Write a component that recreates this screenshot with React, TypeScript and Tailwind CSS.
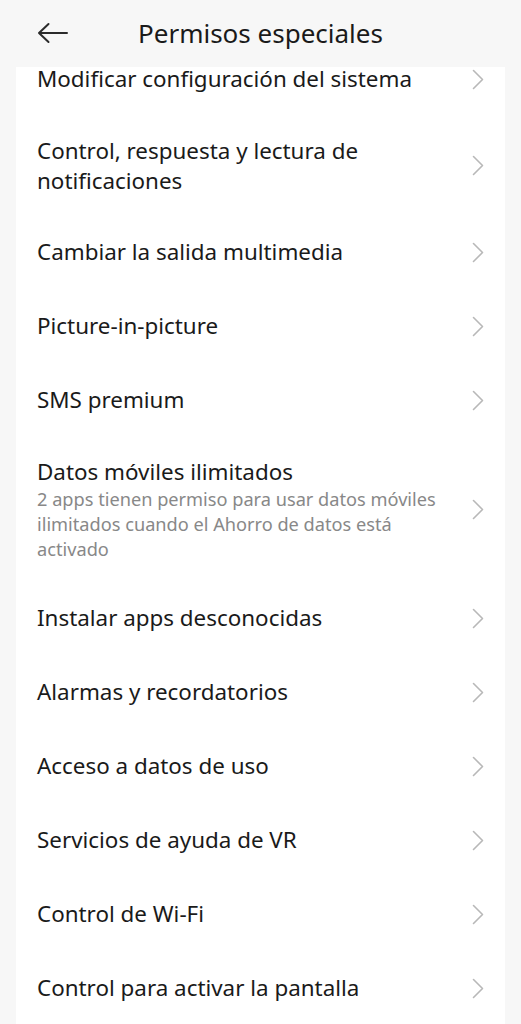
import React from "react";

type Item = {
  title: string;
  subtitle?: string;
};

const items: Item[] = [
  { title: "Modificar configuración del sistema" },
  { title: "Control, respuesta y lectura de notificaciones" },
  { title: "Cambiar la salida multimedia" },
  { title: "Picture-in-picture" },
  { title: "SMS premium" },
  {
    title: "Datos móviles ilimitados",
    subtitle:
      "2 apps tienen permiso para usar datos móviles ilimitados cuando el Ahorro de datos está activado",
  },
  { title: "Instalar apps desconocidas" },
  { title: "Alarmas y recordatorios" },
  { title: "Acceso a datos de uso" },
  { title: "Servicios de ayuda de VR" },
  { title: "Control de Wi-Fi" },
  { title: "Control para activar la pantalla" },
];

const Chevron: React.FC = () => (
  <svg width="12" height="21" viewBox="0 0 12 21" fill="none" className="shrink-0">
    <polyline
      points="1.5,1.5 10.5,10.5 1.5,19.5"
      stroke="#b8b8b8"
      strokeWidth={1.6}
      strokeLinecap="round"
      strokeLinejoin="round"
    />
  </svg>
);

const App: React.FC = () => {
  return (
    <div
      className="min-h-screen w-[521px] bg-[#f7f7f7] overflow-hidden"
      style={{ fontFamily: "'Noto Sans', Roboto, sans-serif" }}
    >
      {/* Header */}
      <div className="h-[67px] flex items-center pb-[2px]">
        <button className="ml-[37px] w-[32px] h-[24px] flex items-center justify-center">
          <svg width="32" height="22" viewBox="0 0 32 22" fill="none">
            <path
              d="M2 11 H30 M11.5 2 L2 11 L11.5 20"
              stroke="#2b2b2b"
              strokeWidth={2}
              strokeLinecap="round"
              strokeLinejoin="round"
            />
          </svg>
        </button>
        <h1 className="ml-[69px] text-[26px] text-[#1a1a1a] leading-none">
          Permisos especiales
        </h1>
      </div>

      {/* List card */}
      <div className="mx-[16px] bg-white pb-[40px]">
        {items.map((item, i) => {
          const first = i === 0;
          return (
            <div
              key={item.title}
              className={
                first
                  ? "flex items-center justify-between px-[21px] pt-0 pb-[25px]"
                  : "flex items-center justify-between px-[21px] py-[19.5px] min-h-[74px]"
              }
            >
              <div className="flex-1 pr-[22px]">
                <div
                  className={
                    first
                      ? "text-[22.4px] leading-[24px] text-[#1a1a1a]"
                      : "text-[22.4px] leading-[30px] text-[#1a1a1a]"
                  }
                >
                  {item.title}
                </div>
                {item.subtitle && (
                  <div className="text-[18.2px] leading-[25px] text-[#888888]">
                    {item.subtitle}
                  </div>
                )}
              </div>
              <Chevron />
            </div>
          );
        })}
      </div>
    </div>
  );
};

export default App;
